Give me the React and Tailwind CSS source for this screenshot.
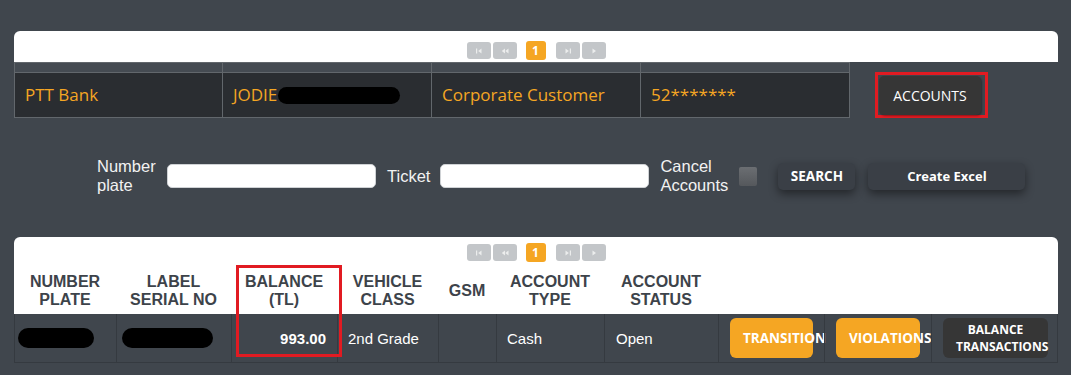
import React from 'react';

function PagerIcon({ kind }) {
  return (
    <svg width="10" height="8" viewBox="0 0 10 8" fill="#eceded">
      {kind === 'first' && (
        <>
          <rect x="2" y="1.5" width="1.2" height="5" />
          <path d="M7.5 1.5 L4.2 4 L7.5 6.5 Z" />
        </>
      )}
      {kind === 'prev' && (
        <>
          <path d="M5 1.5 L1.8 4 L5 6.5 Z" />
          <path d="M8.5 1.5 L5.3 4 L8.5 6.5 Z" />
        </>
      )}
      {kind === 'next' && (
        <>
          <path d="M2.5 1.5 L5.8 4 L2.5 6.5 Z" />
          <rect x="6.8" y="1.5" width="1.2" height="5" />
        </>
      )}
      {kind === 'last' && <path d="M3.5 1.5 L7 4 L3.5 6.5 Z" />}
    </svg>
  );
}

function Pager() {
  const btn = 'w-6 h-[17px] rounded-[3px] bg-[#c3c6c9] flex items-center justify-center';
  return (
    <div className="flex items-center">
      <div className="flex gap-[2px]">
        <span className={btn}><PagerIcon kind="first" /></span>
        <span className={btn}><PagerIcon kind="prev" /></span>
      </div>
      <span className="ml-[9px] mr-[10px] w-5 h-[19px] rounded-[3px] bg-[#f5a623] text-white text-[12px] font-bold flex items-center justify-center">
        1
      </span>
      <div className="flex gap-[2px]">
        <span className={btn}><PagerIcon kind="next" /></span>
        <span className={btn}><PagerIcon kind="last" /></span>
      </div>
    </div>
  );
}

const topCells = [
  { text: 'PTT Bank' },
  { text: 'JODIE', redacted: true },
  { text: 'Corporate Customer' },
  { text: '52*******' },
];

const headers = [
  ['NUMBER', 'PLATE'],
  ['LABEL', 'SERIAL NO'],
  ['BALANCE', '(TL)'],
  ['VEHICLE', 'CLASS'],
  ['GSM'],
  ['ACCOUNT', 'TYPE'],
  ['ACCOUNT', 'STATUS'],
  [],
  [],
  [],
];

const cols = 'grid grid-cols-[102px_115px_106px_101px_58px_108px_114px_106px_107px_127px]';

// text is centred in the padded box; words wider than it spill out to the right
function ActionButton({ children, dark, width }) {
  return (
    <div
      className={`ml-[11px] h-[40px] rounded-[6px] px-[13px] flex flex-col justify-center text-white font-bold font-['Open_Sans',sans-serif] ${
        dark ? 'bg-[#363636] text-[12px] leading-[17px]' : 'bg-[#f5a623] text-[13.5px] leading-[18px]'
      } ${width}`}
    >
      <span className="block text-center whitespace-pre-line">{children}</span>
    </div>
  );
}

export default function App() {
  return (
    <div className="w-full min-h-screen bg-[#40464d] pt-[31px] overflow-hidden">
      {/* top summary */}
      <div className="ml-[14px] w-[1044px]">
        <div className="h-[31px] bg-white rounded-t-[6px] flex justify-center pt-[8px]">
          <Pager />
        </div>
        <div className="flex items-start">
          <div className="w-[836px] border-r border-[#62676c] font-['Open_Sans',sans-serif]">
            <div className="grid grid-cols-[208px_209px_209px_209px] h-[10px] bg-[#454b52] border-t border-[#62676c]">
              {topCells.map((c, i) => (
                <div key={i} className="border-l border-[#62676c]" />
              ))}
            </div>
            <div className="grid grid-cols-[208px_209px_209px_209px] h-[46px] bg-[#2a2d31] border-y border-[#62676c]">
              {topCells.map((c, i) => (
                <div key={i} className="border-l border-[#62676c] flex items-center pl-[10px] text-[17px] text-[#f5a623]">
                  {c.text}
                  {c.redacted && <span className="ml-[1px] w-[122px] h-[17px] rounded-full bg-black" />}
                </div>
              ))}
            </div>
          </div>
          <div className="ml-[25px] mt-[10px] w-[113px] h-[46px] border-[3px] border-[#e11b22] pt-[1px] pl-[1px]">
            <button className="w-[102px] h-[39px] rounded-[5px] bg-[#363636] shadow-[1px_1px_2px_rgba(0,0,0,0.35)] text-white text-[14px] font-['Open_Sans',sans-serif]">
              ACCOUNTS
            </button>
          </div>
        </div>
      </div>

      {/* search row */}
      <div className="mt-[38px] h-[40px] pl-[97px] flex items-center font-['Liberation_Sans',Arial,sans-serif] text-[16.5px] leading-[19px] text-[#f2f2f2]">
        <span className="w-[60px]">Number plate</span>
        <input className="ml-[10px] w-[209px] h-[24px] rounded-[5px] bg-white border border-[#cfd2d5] outline-none" />
        <span className="ml-[11px]">Ticket</span>
        <input className="ml-[10px] w-[209px] h-[24px] rounded-[5px] bg-white border border-[#cfd2d5] outline-none" />
        <span className="ml-[11px] w-[70px]">Cancel Accounts</span>
        <span className="ml-[9px] w-[18px] h-[19px] rounded-[2px] bg-gradient-to-b from-[#6b6e72] to-[#55585c]" />
        <button className="ml-[21px] w-[77px] h-[27px] rounded-[5px] bg-[#3a3f46] shadow-[0_4px_10px_rgba(0,0,0,0.45)] text-white text-[13.5px] font-bold font-['Open_Sans',sans-serif]">
          SEARCH
        </button>
        <button className="ml-[13px] w-[157px] h-[27px] rounded-[5px] bg-[#3a3f46] shadow-[0_4px_10px_rgba(0,0,0,0.45)] text-white text-[13px] font-bold font-['Open_Sans',sans-serif]">
          Create Excel
        </button>
      </div>

      {/* accounts table */}
      <div className="relative ml-[14px] mt-[41px] w-[1044px]">
        <div className="h-[77px] bg-white rounded-t-[6px]">
          <div className="pt-[6px] flex justify-center">
            <Pager />
          </div>
          <div className={`${cols} h-[52px] pt-[6px] font-['Liberation_Sans',Arial,sans-serif] font-bold text-[16px] leading-[18px] text-[#3d434a]`}>
            {headers.map((h, i) => (
              <div key={i} className="flex flex-col items-center justify-center text-center">
                {h.map((l) => (
                  <span key={l} className="whitespace-nowrap">{l}</span>
                ))}
              </div>
            ))}
          </div>
        </div>
        <div className={`${cols} h-[49px] border-b border-r border-[#353a40] font-['Liberation_Sans',Arial,sans-serif] text-[15px] text-white`}>
          <div className="border-l border-[#353a40] flex items-center pl-[3px]">
            <span className="w-[76px] h-[20px] rounded-full bg-black" />
          </div>
          <div className="border-l border-[#353a40] flex items-center pl-[5px]">
            <span className="w-[91px] h-[20px] rounded-full bg-black" />
          </div>
          <div className="border-l border-[#353a40] flex items-center justify-end pr-[11px] pt-[2px] font-bold">993.00</div>
          <div className="border-l border-[#353a40] flex items-center pl-[10px] pt-[2px]">2nd Grade</div>
          <div className="border-l border-[#353a40]" />
          <div className="border-l border-[#353a40] flex items-center pl-[10px] pt-[2px]">Cash</div>
          <div className="border-l border-[#353a40] flex items-center pl-[11px] pt-[2px]">Open</div>
          <div className="border-l border-[#353a40] flex items-center">
            <ActionButton width="w-[83px]">TRANSITION</ActionButton>
          </div>
          <div className="border-l border-[#353a40] flex items-center">
            <ActionButton width="w-[84px]">VIOLATIONS</ActionButton>
          </div>
          <div className="border-l border-[#353a40] flex items-center">
            <ActionButton dark width="w-[105px]">{'BALANCE\nTRANSACTIONS'}</ActionButton>
          </div>
        </div>
        <div className="absolute left-[222px] top-[28px] w-[106px] h-[92px] border-[3px] border-[#e11b22]" />
      </div>
    </div>
  );
}
